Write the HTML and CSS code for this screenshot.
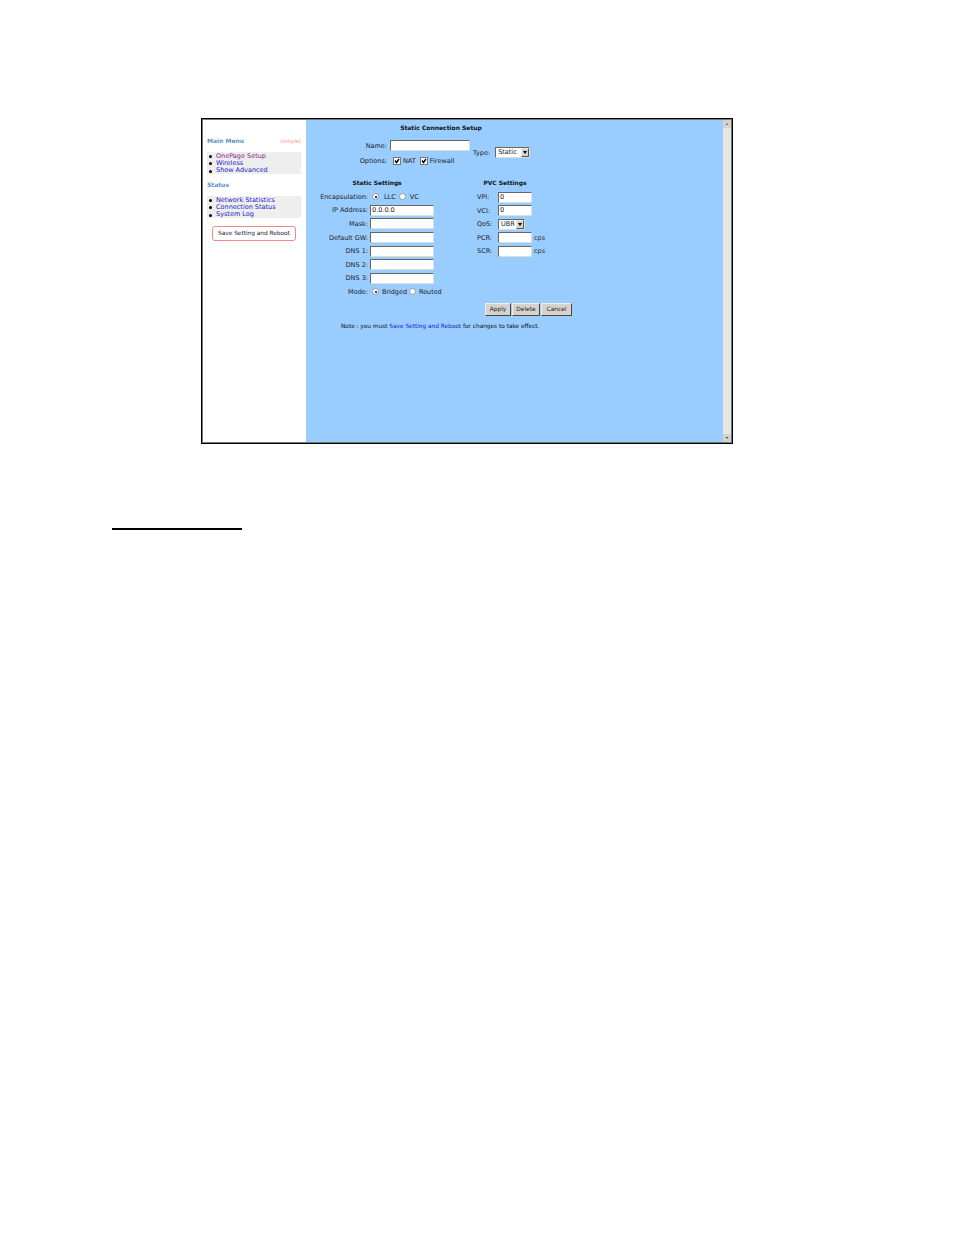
FILE: index.html
```html
<!DOCTYPE html>
<html lang="en">
<head>
    <meta charset="UTF-8">
    <meta name="viewport" content="width=device-width, initial-scale=1.0">
    <title>Static Connection Setup</title>
    <link rel="stylesheet" href="styles.css">
</head>
<body>
    <div class="shot">
        <div class="sidebar">
            <div class="menu-head"><span class="menu-title">Main Menu</span><span class="simple">(simple)</span></div>
            <ul class="menu-list">
                <li><a class="visited">OnePage Setup</a></li>
                <li><a>Wireless</a></li>
                <li><a>Show Advanced</a></li>
            </ul>
            <div class="menu-title status-title">Status</div>
            <ul class="menu-list">
                <li><a>Network Statistics</a></li>
                <li><a>Connection Status</a></li>
                <li><a>System Log</a></li>
            </ul>
            <div class="save-box">Save Setting and Reboot</div>
        </div>

        <div class="main">
            <div class="title">Static Connection Setup</div>
            <div class="top-form">
                <div class="top-left">
                    <label class="top-label">Name:</label>
                    <span class="field name-field"></span>
                    <label class="top-label">Options:</label>
                    <span class="checks">
                        <span class="check"><svg viewBox="0 0 6 6"><path d="M1 2.5 L2.5 4.5 L5 1" fill="none" stroke="#000" stroke-width="1.4"/></svg></span>NAT
                        <span class="check check-2"><svg viewBox="0 0 6 6"><path d="M1 2.5 L2.5 4.5 L5 1" fill="none" stroke="#000" stroke-width="1.4"/></svg></span>Firewall
                    </span>
                </div>
                <div class="type-row">
                    <label>Type:</label>
                    <span class="select type-select">Static<span class="arrow"></span></span>
                </div>
            </div>

            <div class="columns">
                <div class="col-static">
                    <div class="col-head">Static Settings</div>
                    <div class="static-grid">
                        <label>Encapsulation:</label>
                        <span class="radios"><span class="radio on"></span>LLC<span class="radio radio-2"></span>VC</span>
                        <label>IP Address:</label><span class="field wide">0.0.0.0</span>
                        <label>Mask:</label><span class="field wide"></span>
                        <label>Default GW:</label><span class="field wide"></span>
                        <label>DNS 1:</label><span class="field wide"></span>
                        <label>DNS 2:</label><span class="field wide"></span>
                        <label>DNS 3:</label><span class="field wide"></span>
                        <label>Mode:</label>
                        <span class="radios mode"><span class="radio on"></span>Bridged<span class="radio radio-3"></span>Routed</span>
                    </div>
                </div>
                <div class="col-pvc">
                    <div class="col-head pvc-head">PVC Settings</div>
                    <div class="pvc-grid">
                        <label>VPI:</label><span class="field small">0</span><span></span>
                        <label>VCI:</label><span class="field small">0</span><span></span>
                        <label>QoS:</label><span class="select qos-select">UBR<span class="arrow"></span></span><span></span>
                        <label>PCR:</label><span class="field small"></span><span class="unit">cps</span>
                        <label>SCR:</label><span class="field small"></span><span class="unit">cps</span>
                    </div>
                </div>
            </div>

            <div class="buttons">
                <button class="btn-apply">Apply</button><button class="btn-delete">Delete</button><button class="btn-cancel">Cancel</button>
            </div>
            <div class="note">Note : you must <a>Save Setting and Reboot</a> for changes to take effect.</div>
        </div>

        <div class="scrollbar">
            <span class="scroll-btn"><svg viewBox="0 0 8 8"><path d="M4 3 L5.5 5 L2.5 5 Z" fill="#777"/></svg></span>
            <span class="scroll-btn"><svg viewBox="0 0 8 8"><path d="M2.5 3 L5.5 3 L4 5 Z" fill="#555"/></svg></span>
        </div>
    </div>

    <div class="heading-rule"></div>
</body>
</html>
```

FILE: styles.css
```css
body {
    margin: 0;
    min-height: 1235px;
    background-color: #fff;
    font-family: "DejaVu Sans", Verdana, sans-serif;
    font-size: 6.5px;
    color: #222;
}
.shot {
    display: flex;
    width: 528px;
    height: 322px;
    margin: 118px 0 0 201px;
    padding: 1px;
    border: 1px solid #000;
    background-color: #777;
}
/* Sidebar */
.sidebar {
    width: 103px;
    flex: none;
    padding: 17px 5px 0 4px;
    box-sizing: border-box;
    background-color: #fff;
}
.menu-head {
    display: flex;
    justify-content: space-between;
    align-items: baseline;
}
.menu-title {
    color: #5b93c9;
    font-weight: bold;
    font-size: 6px;
    line-height: 8px;
}
.simple {
    color: #f08a8a;
    font-size: 5.1px;
}
.status-title {
    margin-top: 7px;
}
.menu-list {
    margin: 7px 0 0 0;
    padding: 0.7px 0 0 9px;
    box-sizing: border-box;
    background-color: #eeeeee;
    height: 22px;
    font-size: 6.5px;
    list-style: none;
}
.menu-list li {
    display: flex;
    align-items: center;
    height: 7.4px;
    line-height: 7.4px;
    white-space: nowrap;
}
.menu-list li::before {
    content: "";
    width: 3px;
    height: 3px;
    margin: 0 4px 0 -7px;
    border-radius: 50%;
    background-color: #000;
}
.menu-list a {
    color: #1a1acc;
}
.menu-list a.visited {
    color: #8a1a8a;
}
.save-box {
    width: 84px;
    height: 15px;
    box-sizing: border-box;
    margin: 8px 0 0 5px;
    border: 1px solid #f08a8a;
    border-radius: 3px;
    text-align: center;
    line-height: 13px;
    font-size: 5.8px;
    color: #223;
}
/* Main panel */
.main {
    flex: 1;
    background-color: #99ccff;
    padding-top: 4px;
}
.title {
    width: 270px;
    text-align: center;
    font-weight: bold;
    font-size: 6px;
    line-height: 8px;
    color: #111;
}
.top-form {
    display: flex;
    align-items: center;
    margin-top: 8px;
}
.top-left {
    display: grid;
    grid-template-columns: 81px 80px;
    column-gap: 3px;
    row-gap: 4px;
    align-items: center;
}
.top-left .top-label:last-of-type {
    margin-top: 2px;
}
.top-label {
    text-align: right;
}
.checks {
    display: flex;
    align-items: center;
    white-space: nowrap;
    margin-top: 2px;
    padding-left: 3px;
}
.check {
    display: inline-block;
    width: 6px;
    height: 6px;
    margin-right: 2px;
    background-color: #fff;
    border: 1px solid #777;
}
.check svg {
    display: block;
}
.check-2 {
    margin-left: 4px;
}
.type-row {
    display: flex;
    align-items: center;
    gap: 5px;
    margin-left: 3px;
}
.field {
    display: block;
    box-sizing: border-box;
    height: 11px;
    background-color: #fff;
    border-style: solid;
    border-width: 1px;
    border-color: #666 #ddd #ddd #666;
    line-height: 9px;
    padding-left: 1px;
}
.name-field {
    width: 80px;
}
.wide {
    width: 64px;
}
.small {
    width: 34px;
}
.select {
    position: relative;
    display: block;
    box-sizing: border-box;
    height: 11px;
    background-color: #fff;
    border: 1px solid #777;
    border-color: #666 #ddd #ddd #666;
    line-height: 9px;
    padding-left: 2px;
}
.type-select {
    width: 35px;
}
.qos-select {
    width: 27px;
}
.arrow {
    position: absolute;
    top: 0;
    right: 0;
    width: 8px;
    height: 9px;
    box-sizing: border-box;
    background-color: #d6d3ce;
    border: 1px solid;
    border-color: #eee #555 #555 #eee;
}
.arrow::after {
    content: "";
    position: absolute;
    top: 2px;
    left: 1px;
    border-left: 2px solid transparent;
    border-right: 2px solid transparent;
    border-top: 3px solid #000;
}
.columns {
    display: flex;
    margin-top: 14px;
}
.col-static {
    width: 171px;
}
.col-head {
    width: 142px;
    text-align: center;
    font-weight: bold;
    font-size: 5.9px;
    line-height: 8px;
    color: #111;
}
.static-grid {
    display: grid;
    grid-template-columns: 62px 64px;
    grid-auto-rows: 11px;
    row-gap: 2.55px;
    column-gap: 2px;
    align-items: center;
    margin-top: 4.4px;
}
.static-grid label {
    text-align: right;
    white-space: nowrap;
}
.radios {
    display: flex;
    align-items: center;
    white-space: nowrap;
}
.radio {
    width: 5px;
    height: 5px;
    margin: 0 5px 0 2px;
    border: 1px solid #999;
    border-radius: 50%;
    background-color: #fff;
    flex: none;
    position: relative;
}
.radio.on::after {
    content: "";
    position: absolute;
    top: 1.5px;
    left: 1.5px;
    width: 2px;
    height: 2px;
    border-radius: 50%;
    background-color: #000;
}
.radio-2 {
    margin: 0 4px 0 3px;
}
.mode {
    letter-spacing: -0.05px;
}
.mode .radio {
    margin-right: 3px;
}
.mode .radio-3 {
    margin: 0 3px 0 2px;
}
.col-pvc {
    width: 100px;
}
.pvc-head {
    width: 56px;
}
.pvc-grid {
    display: grid;
    grid-template-columns: 20px 34px auto;
    grid-auto-rows: 11px;
    row-gap: 2.55px;
    column-gap: 1px;
    align-items: center;
    margin-top: 4.8px;
}
.unit {
    padding-left: 1px;
    color: #333;
}
.buttons {
    display: flex;
    margin: 6px 0 0 179px;
}
button {
    height: 13px;
    margin-right: 1px;
    padding: 0;
    background-color: #d6d3ce;
    color: #222;
    font-family: inherit;
    font-size: 5.9px;
    line-height: 9px;
    border-style: solid;
    border-width: 1px;
    border-color: #eee #444 #444 #eee;
}
.btn-apply {
    width: 26px;
}
.btn-delete {
    width: 28px;
}
.btn-cancel {
    width: 31px;
}
.note {
    margin: 6.6px 0 0 35px;
    font-size: 5.8px;
    line-height: 7px;
    color: #111;
    white-space: nowrap;
}
.note a {
    color: #1a1acc;
}
/* Scrollbar */
.scrollbar {
    display: flex;
    flex: none;
    flex-direction: column;
    justify-content: space-between;
    width: 8px;
    background-color: #e8e6e2;
}
.scroll-btn {
    width: 8px;
    height: 8px;
    background-color: #d6d3ce;
}
.scroll-btn svg {
    display: block;
}
.heading-rule {
    width: 130px;
    height: 2px;
    margin: 84px 0 0 112px;
    background-color: #000;
}
```
